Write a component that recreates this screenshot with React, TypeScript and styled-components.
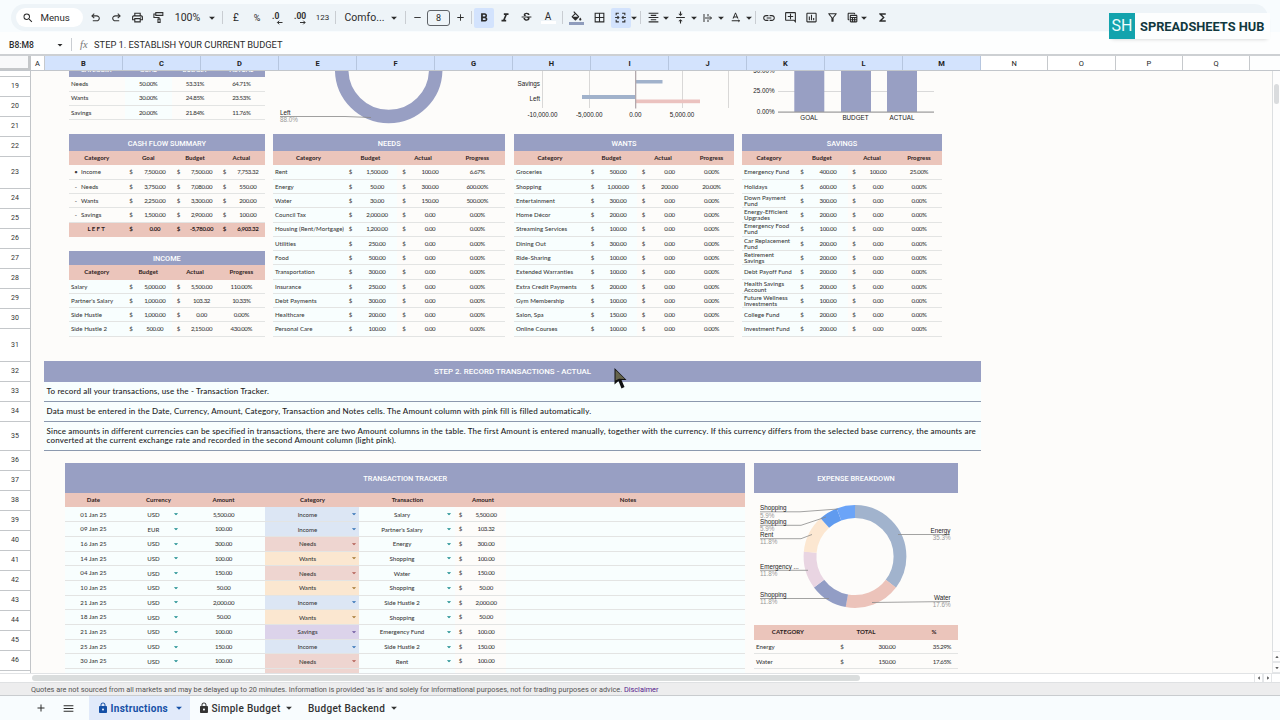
import React from "react";
import styled, {createGlobalStyle} from "styled-components";
import {
    MdAdd, MdArrowDropDown, MdBorderAll, MdFormatAlignCenter, MdFormatBold, MdFormatColorFill, MdFormatItalic,
    MdFunctions, MdInsertChartOutlined, MdLink, MdLock, MdMenu, MdOutlineAddComment, MdOutlineFilterAlt,
    MdOutlinePrint, MdOutlineTableView, MdRemove, MdSearch, MdStrikethroughS, MdTextRotationNone,
    MdVerticalAlignCenter
} from "react-icons/md";

const colors = {
    purple: "#989fc3",
    pink: "#ebc5bb",
    paper: "#fdfcfa",
    ice: "#f8fefe",
    line: "#e3e4e3",
    selected: "#d3e3fd",
    ink: "#2b2b2b",
    blue: "#a1b2cb",
};

const GlobalStyle = createGlobalStyle`
  body {
    margin: 0;
    overflow: hidden;
  }

  * {
    box-sizing: border-box;
  }
`;

const Page = styled.div`
  width: 1280px;
  height: 720px;
  display: flex;
  flex-direction: column;
  overflow: hidden;
  background: #fdfefe;
  color: ${colors.ink};
  font-family: Roboto, "Liberation Sans", sans-serif;
`;

/* ---------- toolbar ---------- */

const ToolbarWrap = styled.header`
  height: 32px;
  flex: none;
  padding: 4px 12px 0 11px;
  background: #f8fcfe;
`;

const Toolbar = styled.div`
  height: 27px;
  display: flex;
  align-items: center;
  padding-left: 5px;
  border-radius: 14px;
  background: #eef4f8;
`;

const MenuSearch = styled.div`
  width: 67px;
  height: 19px;
  display: flex;
  align-items: center;
  gap: 6.5px;
  padding-left: 6px;
  margin-right: 2px;
  border-radius: 10px;
  background: #fff;
  font-size: 9.7px;
`;

const Tool = styled.div<{ $w: number, $active?: boolean, $size?: number }>`
  width: ${p => p.$w}px;
  height: 20px;
  flex: none;
  display: flex;
  flex-direction: column;
  align-items: center;
  justify-content: center;
  border-radius: 2px;
  background: ${p => p.$active ? colors.selected : "transparent"};
  font-size: ${p => p.$size || 10}px;
  white-space: nowrap;
`;

const Divider = styled.div<{ $m?: string }>`
  width: 1px;
  height: 13px;
  flex: none;
  margin: ${p => p.$m || "0"};
  background: #c9cdd2;
`;

const SizeBox = styled.div`
  width: 23px;
  height: 16px;
  flex: none;
  display: flex;
  align-items: center;
  justify-content: center;
  border: 1px solid #5f6368;
  border-radius: 3px;
  font-size: 9px;
`;

const Swatch = styled.span<{ $color: string }>`
  width: 15px;
  height: 2.5px;
  margin-top: -1px;
  background: ${p => p.$color};
`;

const Logo = styled.div`
  position: absolute;
  left: 1109px;
  top: 13px;
  width: 161px;
  height: 26px;
  display: flex;
  align-items: center;
  background: #fdfefe;
  color: #12383e;
  font-size: 12.8px;
  font-weight: 700;
  box-shadow: 0 3px 4px -3px rgba(0, 0, 0, .2);
  white-space: nowrap;

  b {
    width: 26px;
    height: 26px;
    margin-right: 5px;
    background: #13a3ad;
    color: #eefcfc;
    font-size: 16px;
    font-weight: 400;
    line-height: 26px;
    text-align: center;
  }
`;

const FormulaBar = styled.div`
  height: 22px;
  flex: none;
  display: flex;
  align-items: center;
  padding: 3px 0 0 9px;
  font-size: 9px;

  .range {
    width: 45px;
    font-weight: 500;
    font-size: 8.6px;
  }

  .fx {
    margin: 0 6.5px 0 8px;
    color: #777;
    font: italic 10.5px "Liberation Serif", serif;
  }

  .formula {
    font-size: 9.3px;
    white-space: nowrap;
  }
`;

/* ---------- grid frame ---------- */

const ColumnHeads = styled.div`
  height: 17px;
  flex: none;
  display: flex;
  border-top: 2px solid #cdd0d3;
  border-bottom: 1px solid #c2c6cb;
`;

const Corner = styled.div`
  width: 31px;
  background: #f8f9fa;
  border-right: 3px solid #c4c7c9;
  border-bottom: 2px solid #c4c7c9;
`;

const ColumnHead = styled.div<{ $w: number, $selected?: boolean }>`
  width: ${p => p.$w}px;
  flex: none;
  display: flex;
  align-items: center;
  justify-content: center;
  border-right: 1px solid ${p => p.$selected ? "#b6c6df" : "#c6c9cc"};
  background: ${p => p.$selected ? colors.selected : "#fff"};
  color: #222;
  font-size: 7.5px;
  font-weight: ${p => p.$selected ? 700 : 400};
`;

const Body = styled.div`
  height: 602px;
  flex: none;
  display: flex;
  overflow: hidden;
`;

const RowHeads = styled.div`
  width: 31px;
  flex: none;
  border-right: 1px solid #c2c5c8;
  background: #fff;
`;

const RowHead = styled.div<{ $h: number }>`
  height: ${p => p.$h}px;
  display: flex;
  align-items: center;
  justify-content: center;
  padding-bottom: 1px;
  border-bottom: 1px solid #c4c7ca;
  font-size: 7px;
  color: #333;
`;

const Canvas = styled.main`
  width: 1241px;
  flex: none;
  background: ${colors.paper};
  font-family: Lato, "Noto Sans", sans-serif;
  overflow: hidden;
`;

const VScroll = styled.div`
  width: 8px;
  flex: none;
  display: flex;
  flex-direction: column;
  align-items: center;
  border-left: 1px solid #dcdfe1;
  background: #fdfdfd;

  i {
    width: 5px;
    height: 20px;
    margin: 13px 0 auto;
    border-radius: 3px;
    background: #dadcde;
  }
`;

const ScrollArrow = styled.div<{ $turn: number }>`
  width: 9px;
  height: 11px;
  display: flex;
  align-items: center;
  justify-content: center;
  border: 1px solid #e4e6e8;

  svg {
    flex: none;
    transform: rotate(${p => p.$turn}deg);
  }
`;

const HScroll = styled.div`
  height: 9px;
  flex: none;
  display: flex;
  align-items: center;
  padding-left: 32px;
  padding-right: 8px;
  background: #fff;
  border-top: 1px solid #e1e3e5;

  i {
    width: 828px;
    height: 6px;
    margin-right: auto;
    border-radius: 3px;
    background: #dadddd;
  }
`;

const Disclaimer = styled.div`
  height: 14px;
  flex: none;
  padding-left: 31px;
  background: #ededee;
  border-top: 1px solid #dfe1e3;
  border-bottom: 1px solid #c9cccf;
  color: #555;
  font-size: 7.34px;
  line-height: 13px;
  white-space: nowrap;

  a {
    color: #551a8b;
  }
`;

const Tabs = styled.footer`
  height: 24px;
  flex: none;
  display: flex;
  align-items: center;
  padding-left: 34px;
  background: #f8fcfe;
`;

const Tab = styled.div<{ $w: number, $active?: boolean }>`
  width: ${p => p.$w}px;
  height: 24px;
  display: flex;
  align-items: center;
  gap: 1.5px;
  padding: 0 4px 0 8px;
  background: ${p => p.$active ? "#e1eafa" : "transparent"};
  color: ${p => p.$active ? "#1550a6" : "#333"};
  font-size: 10px;
  font-weight: ${p => p.$active ? 700 : 500};
  letter-spacing: 0.3px;
  white-space: nowrap;

  svg:last-child {
    margin-left: auto;
  }
`;

/* ---------- sheet content ---------- */

const TopRow = styled.section`
  height: 63.2px;
  display: flex;
  padding-left: 38px;
`;

const BudgetRow = styled.section`
  height: 226.8px;
  display: flex;
  padding-left: 38px;
`;

const Block = styled.div<{ $w: number, $mr?: number }>`
  width: ${p => p.$w}px;
  flex: none;
  margin-right: ${p => p.$mr || 0}px;
`;

const Title = styled.div<{ $h: number }>`
  height: ${p => p.$h}px;
  display: flex;
  align-items: center;
  justify-content: center;
  padding-top: 1px;
  background: ${colors.purple};
  color: #fff;
  font: 500 7.35px Roboto, sans-serif;
`;

const Row = styled.div<{ $cols: string, $kind?: string, $h?: number }>`
  height: ${p => p.$h || 14.27}px;
  display: grid;
  grid-template-columns: ${p => p.$cols};
  align-items: stretch;
  border-bottom: 1px solid ${p => p.$kind ? "transparent" : colors.line};
  background: ${p => p.$kind === "purple" ? colors.purple : p.$kind ? colors.pink : "transparent"};
  background-clip: border-box;
  color: ${p => p.$kind === "purple" ? "#fff" : p.$kind ? "#2b2020" : "#3a3a3a"};
  font-size: 6.1px;
  font-weight: ${p => p.$kind ? 700 : 500};
`;

const Cell = styled.div<{ $left?: boolean, $ice?: boolean, $num?: boolean, $spaced?: boolean, $bg?: string }>`
  display: flex;
  align-items: center;
  justify-content: ${p => p.$left ? "flex-start" : "center"};
  padding-top: 0.6px;
  padding-left: ${p => p.$left ? 2 : 0}px;
  background: ${p => p.$bg || (p.$ice ? colors.ice : "transparent")};
  line-height: 6px;
  letter-spacing: ${p => p.$num ? -0.35 : p.$spaced ? 1.2 : 0.04}px;
  white-space: ${p => p.$left ? "pre" : "nowrap"};
`;

const Bullet = styled.span`
  width: 10px;
  text-align: center;
`;

const Banner = styled.div`
  width: 937px;
  height: 21px;
  display: flex;
  align-items: center;
  justify-content: center;
  background: ${colors.purple};
  color: #fff;
  font: 500 7.95px Roboto, sans-serif;
`;

const Step = styled.section`
  margin-left: 13px;
`;

const Note = styled.p<{ $h: number }>`
  width: 937px;
  height: ${p => p.$h}px;
  display: flex;
  align-items: center;
  margin: 0;
  padding-left: 2.5px;
  background: ${colors.ice};
  border-bottom: 1px solid #8c99ae;
  color: #222;
  font-size: 8px;
  line-height: 9px;
  font-weight: 500;
  letter-spacing: 0.182px;
  white-space: pre;
`;

const TrackerRow = styled.section`
  display: flex;
  padding: 12.2px 0 0 34px;
`;

const Pick = styled.div<{ $bg: string, $center: number, $caret: number, $color: string }>`
  display: flex;
  align-items: center;
  background: ${p => p.$bg};
  white-space: nowrap;

  span {
    width: ${p => p.$center * 2}px;
    flex: none;
    text-align: center;
  }

  svg {
    margin-left: ${p => p.$caret - p.$center * 2 - 5.5}px;
    flex: none;
    color: ${p => p.$color};
  }
`;

const ChartText = styled.text<{ $grey?: boolean }>`
  fill: ${p => p.$grey ? "#999" : "#222"};
  font: 6.3px "Liberation Sans", Arial, sans-serif;
`;

const Pointer = styled.svg`
  position: absolute;
  left: 613px;
  top: 367px;
`;

const months = [
    ["Needs", "50.00%", "53.31%", "64.71%"],
    ["Wants", "30.00%", "24.85%", "23.53%"],
    ["Savings", "20.00%", "21.84%", "11.76%"],
];

const cashFlow = [
    ["•", "Income", "7,500.00", "7,500.00", "7,753.32"],
    ["-", "Needs", "3,750.00", "7,080.00", "550.00"],
    ["-", "Wants", "2,250.00", "3,300.00", "200.00"],
    ["-", "Savings", "1,500.00", "2,900.00", "100.00"],
];

const income = [
    ["Salary", "5,000.00", "5,500.00", "110.00%"],
    ["Partner's Salary", "1,000.00", "103.32", "10.33%"],
    ["Side Hustle", "1,000.00", "0.00", "0.00%"],
    ["Side Hustle 2", "500.00", "2,150.00", "430.00%"],
];

const needs = [
    ["Rent", "1,500.00", "100.00", "6.67%"],
    ["Energy", "50.00", "300.00", "600.00%"],
    ["Water", "30.00", "150.00", "500.00%"],
    ["Council Tax", "2,000.00"],
    ["Housing (Rent/Mortgage)", "1,200.00"],
    ["Utilities", "250.00"],
    ["Food", "500.00"],
    ["Transportation", "300.00"],
    ["Insurance", "250.00"],
    ["Debt Payments", "300.00"],
    ["Healthcare", "200.00"],
    ["Personal Care", "100.00"],
];

const wants = [
    ["Groceries", "500.00"],
    ["Shopping", "1,000.00", "200.00", "20.00%"],
    ["Entertainment", "300.00"],
    ["Home Décor", "200.00"],
    ["Streaming Services", "100.00"],
    ["Dining Out", "300.00"],
    ["Ride-Sharing", "100.00"],
    ["Extended Warranties", "100.00"],
    ["Extra Credit Payments", "200.00"],
    ["Gym Membership", "100.00"],
    ["Salon, Spa", "150.00"],
    ["Online Courses", "100.00"],
];

const savings = [
    ["Emergency Fund", "400.00", "100.00", "25.00%"],
    ["Holidays", "600.00"],
    ["Down Payment\nFund", "300.00"],
    ["Energy-Efficient\nUpgrades", "200.00"],
    ["Emergency Food\nFund", "100.00"],
    ["Car Replacement\nFund", "200.00"],
    ["Retirement\nSavings", "200.00"],
    ["Debt Payoff Fund", "200.00"],
    ["Health Savings\nAccount", "200.00"],
    ["Future Wellness\nInvestments", "100.00"],
    ["College Fund", "200.00"],
    ["Investment Fund", "200.00"],
];

const transactions = [
    ["01 Jan 25", "USD", "5,500.00", "Income", "Salary", "5,500.00"],
    ["09 Jan 25", "EUR", "100.00", "Income", "Partner's Salary", "103.32"],
    ["16 Jan 25", "USD", "300.00", "Needs", "Energy", "300.00"],
    ["14 Jan 25", "USD", "100.00", "Wants", "Shopping", "100.00"],
    ["04 Jan 25", "USD", "150.00", "Needs", "Water", "150.00"],
    ["10 Jan 25", "USD", "50.00", "Wants", "Shopping", "50.00"],
    ["21 Jan 25", "USD", "2,000.00", "Income", "Side Hustle 2", "2,000.00"],
    ["18 Jan 25", "USD", "50.00", "Wants", "Shopping", "50.00"],
    ["21 Jan 25", "USD", "100.00", "Savings", "Emergency Fund", "100.00"],
    ["25 Jan 25", "USD", "150.00", "Income", "Side Hustle 2", "150.00"],
    ["30 Jan 25", "USD", "100.00", "Needs", "Rent", "100.00"],
    ["", "", "", "Needs", "", ""],
];

const kinds: Record<string, { bg: string, caret: string }> = {
    Income: {bg: "#dce6f4", caret: "#2f6fb5"},
    Needs: {bg: "#eed5d0", caret: "#b05a50"},
    Wants: {bg: "#fbe7d0", caret: "#a5762f"},
    Savings: {bg: "#dcd3ea", caret: "#6a559c"},
};

const rowHeights = [6, 20, 20, 20, 20, 32, 20, 20, 20, 20, 20, 20, 20, 33, 20, 20, 20, 29, 20, 20, 20, 20, 20, 20, 20, 20, 20, 20, 20];

function Caret(props: { size?: number }) {
    return <MdArrowDropDown size={props.size || 14}/>;
}

function Svg(props: { d: string, size?: number }) {
    return (
        <svg width={props.size || 13} height={props.size || 13} viewBox="0 0 24 24" fill="none" stroke="#333"
             strokeWidth={2}>
            <path d={props.d}/>
        </svg>
    );
}

function Decimal(props: { label: string, right?: boolean }) {
    return (
        <svg width={16} height={14} viewBox="0 0 16 14">
            <text x={props.right ? 1 : 2} y={8} fontFamily="Roboto, sans-serif" fontSize={8.5} fontWeight={700}
                  fill="#333">{props.label}</text>
            <path d={props.right ? "M7 11.500h5M10.300 9.700l1.800 1.800-1.800 1.800" : "M12.500 11.500h-5M9.200 9.700L7.400 11.500l1.800 1.800"}
                  stroke="#333" fill="none"/>
        </svg>
    );
}

function ToolbarItems() {
    return (
        <Toolbar>
            <MenuSearch><MdSearch size={12}/>Menus</MenuSearch>
            <Tool $w={21}>
                <svg width={13} height={13} viewBox="0 -960 960 960" fill="#333">
                    <path d="M280-200v-80h284q63 0 109.500-40T720-420q0-60-46.500-100T564-560H312l104 104-56 56-200-200 200-200 56 56-104 104h252q97 0 166.500 63T800-420q0 94-69.500 157T564-200H280Z"/>
                </svg>
            </Tool>
            <Tool $w={21}>
                <svg width={13} height={13} viewBox="0 -960 960 960" fill="#333">
                    <path d="M396-200q-97 0-166.500-63T160-420q0-94 69.500-157T396-640h252L544-744l56-56 200 200-200 200-56-56 104-104H396q-63 0-109.500 40T240-420q0 60 46.500 100T396-280h284v80H396Z"/>
                </svg>
            </Tool>
            <Tool $w={21}><MdOutlinePrint size={13}/></Tool>
            <Tool $w={21}><Svg d="M7 3h13v5H7zM7 5.500H3.500v6.500H13v3M11 15h4v6h-4z"/></Tool>
            <Tool $w={37} $size={10.5}>100%</Tool>
            <Tool $w={11}><Caret/></Tool>
            <Divider $m="0 1px 0 5px"/>
            <Tool $w={24}>£</Tool>
            <Tool $w={18} $size={9}>%</Tool>
            <Tool $w={24}><Decimal label=".0"/></Tool>
            <Tool $w={21}><Decimal label=".00" right/></Tool>
            <Tool $w={23} $size={8}>123</Tool>
            <Divider $m="0 2px 0 1px"/>
            <Tool $w={53} $size={10.5}>Comfo...</Tool>
            <Tool $w={5}><Caret/></Tool>
            <Divider $m="0 1px 0 9px"/>
            <Tool $w={20}><MdRemove size={11}/></Tool>
            <SizeBox>8</SizeBox>
            <Tool $w={20}><MdAdd size={11}/></Tool>
            <Divider $m="0 2px 0 1px"/>
            <Tool $w={20} $active><MdFormatBold size={14}/></Tool>
            <Tool $w={22}><MdFormatItalic size={14}/></Tool>
            <Tool $w={21}><MdStrikethroughS size={13}/></Tool>
            <Tool $w={22}>A<Swatch $color="#fff"/></Tool>
            <Divider $m="0 2px 0 2.500px"/>
            <Tool $w={23}><MdFormatColorFill size={13} viewBox="0 0 24 19"/><Swatch $color="#8f9cbc"/></Tool>
            <Tool $w={23}><MdBorderAll size={13}/></Tool>
            <Tool $w={20} $active>
                <Svg d="M9 4H4v4M15 4h5v4M9 20H4v-4M15 20h5v-4M2 12h7M6.500 9.500L9 12l-2.500 2.500M22 12h-7M17.500 9.500L15 12l2.500 2.500"/>
            </Tool>
            <Tool $w={7}><Caret/></Tool>
            <Divider $m="0 1px 0 2.500px"/>
            <Tool $w={22}><MdFormatAlignCenter size={13}/></Tool>
            <Tool $w={4}><Caret/></Tool>
            <Tool $w={24}><MdVerticalAlignCenter size={13}/></Tool>
            <Tool $w={3}><Caret/></Tool>
            <Tool $w={25}><Svg d="M4 4v16M12 4v5M12 15v5M6 12h13M15.500 8.500L19 12l-3.500 3.500" size={12}/></Tool>
            <Tool $w={2}><Caret/></Tool>
            <Tool $w={26}><MdTextRotationNone size={13}/></Tool>
            <Tool $w={2}><Caret/></Tool>
            <Divider $m="0 1px 0 5px"/>
            <Tool $w={23}><MdLink size={14}/></Tool>
            <Tool $w={20}><MdOutlineAddComment size={13}/></Tool>
            <Tool $w={22}><MdInsertChartOutlined size={13}/></Tool>
            <Tool $w={21}><MdOutlineFilterAlt size={13}/></Tool>
            <Tool $w={18}><MdOutlineTableView size={13}/></Tool>
            <Tool $w={6}><Caret/></Tool>
            <Tool $w={30}><MdFunctions size={13}/></Tool>
        </Toolbar>
    );
}

function BudgetTable(props: { title: string, rows: string[][], cols: number[], w: number, mr?: number }) {
    const {title, rows, cols, w, mr} = props;
    const [cat, d1, v1, d2, v2] = cols;
    const grid = `${cat}px ${d1}px ${v1}px ${d2}px ${v2}px 1fr`;
    return (
        <Block $w={w} $mr={mr}>
            <Title $h={17}>{title}</Title>
            <Row $kind="pink" $cols={`${cat}px ${d1 + v1}px ${d2 + v2}px 1fr`}>
                <Cell>Category</Cell><Cell>Budget</Cell><Cell>Actual</Cell><Cell>Progress</Cell>
            </Row>
            {rows.map(([name, budget, actual = "0.00", progress = "0.00%"]) => (
                <Row key={name} $cols={grid}>
                    <Cell $left $ice>{name}</Cell>
                    <Cell $ice>$</Cell>
                    <Cell $num $ice>{budget}</Cell>
                    <Cell>$</Cell>
                    <Cell $num>{actual}</Cell>
                    <Cell $num>{progress}</Cell>
                </Row>
            ))}
        </Block>
    );
}

const headCols = "55.5px 47.5px 46px 1fr";
const summaryCols = "55.5px 13px 34.5px 13px 33px 13px 1fr";

const Gap = styled.div`
  height: 14.27px;
`;

function Summary() {
    return (
        <Block $w={195.7} $mr={8.3}>
            <Title $h={17}>CASH FLOW SUMMARY</Title>
            <Row $kind="pink" $cols={headCols}>
                <Cell>Category</Cell><Cell>Goal</Cell><Cell>Budget</Cell><Cell>Actual</Cell>
            </Row>
            {cashFlow.map(([mark, name, goal, budget, actual]) => (
                <Row key={name} $cols={summaryCols}>
                    <Cell $left><Bullet>{mark}</Bullet>{name}</Cell>
                    <Cell>$</Cell><Cell $num>{goal}</Cell>
                    <Cell>$</Cell><Cell $num>{budget}</Cell>
                    <Cell>$</Cell><Cell $num>{actual}</Cell>
                </Row>
            ))}
            <Row $kind="pink" $cols={summaryCols}>
                <Cell $spaced>LEFT</Cell>
                <Cell>$</Cell><Cell $num>0.00</Cell>
                <Cell>$</Cell><Cell $num>-5,780.00</Cell>
                <Cell>$</Cell><Cell $num>6,903.32</Cell>
            </Row>
            <Gap/>
            <Title $h={14.27}>INCOME</Title>
            <Row $kind="pink" $cols={headCols}>
                <Cell>Category</Cell><Cell>Budget</Cell><Cell>Actual</Cell><Cell>Progress</Cell>
            </Row>
            {income.map(([name, budget, actual, progress]) => (
                <Row key={name} $cols="55.5px 13px 34.500px 13px 33px 1fr">
                    <Cell $left $ice>{name}</Cell>
                    <Cell $ice>$</Cell><Cell $num $ice>{budget}</Cell>
                    <Cell>$</Cell><Cell $num>{actual}</Cell>
                    <Cell $num>{progress}</Cell>
                </Row>
            ))}
        </Block>
    );
}

function BudgetDonut() {
    return (
        <svg width={241} height={63} viewBox="273 71 241 63">
            <circle cx={388.7} cy={69.500} r={47} fill="none" stroke={colors.purple} strokeWidth={13.500}/>
            <path d="M280 116.500H345L371 117.500" stroke="#888" strokeWidth={0.8} fill="none"/>
            <ChartText x={280} y={115.300}>Left</ChartText>
            <ChartText x={280} y={122.300} $grey>88.0%</ChartText>
        </svg>
    );
}

function CashFlowBars() {
    return (
        <svg width={228} height={63} viewBox="514 71 228 63">
            {[542, 589, 682, 728].map(x => <rect key={x} x={x} y={71} width={1} height={37} fill="#d9d8d7"/>)}
            <rect x={636} y={80} width={26.500} height={3.500} fill={colors.blue}/>
            <rect x={582} y={95} width={54} height={4} fill={colors.blue}/>
            <rect x={636} y={99.500} width={64} height={3.700} fill="#ebc2bf"/>
            <rect x={635} y={71} width={1.300} height={37.500} fill="#b3a9ad"/>
            <g textAnchor="end">
                <ChartText x={540} y={86.300}>Savings</ChartText>
                <ChartText x={540} y={101.300}>Left</ChartText>
            </g>
            <g textAnchor="middle">
                <ChartText x={542.500} y={117}>-10,000.00</ChartText>
                <ChartText x={589.300} y={117}>-5,000.00</ChartText>
                <ChartText x={635.500} y={117}>0.00</ChartText>
                <ChartText x={682} y={117}>5,000.00</ChartText>
            </g>
        </svg>
    );
}

function ShareColumns() {
    return (
        <svg width={200} height={63} viewBox="742 71 200 63">
            <rect x={778} y={91} width={156} height={1} fill="#d9d9d9"/>
            {[794.300, 841, 887].map(x => <rect key={x} x={x} y={71} width={30} height={41} fill={colors.purple}/>)}
            <rect x={778} y={111.500} width={156} height={1.200} fill="#999"/>
            <g textAnchor="end">
                <ChartText x={774.700} y={73}>50.00%</ChartText>
                <ChartText x={774.700} y={93.300}>25.00%</ChartText>
                <ChartText x={774.700} y={113.700}>0.00%</ChartText>
            </g>
            <g textAnchor="middle">
                <ChartText x={809} y={119.500}>GOAL</ChartText>
                <ChartText x={855.500} y={119.500}>BUDGET</ChartText>
                <ChartText x={902} y={119.500}>ACTUAL</ChartText>
            </g>
        </svg>
    );
}

const slices = [
    {share: 35.3, color: "#a1b3cd"},
    {share: 17.6, color: "#ecc3ba"},
    {share: 11.8, color: "#929dc5"},
    {share: 11.8, color: "#e9d5e2"},
    {share: 11.8, color: "#fce7d1"},
    {share: 5.9, color: "#609bef"},
    {share: 5.8, color: "#6ba4f8"},
];

const labels = [
    {name: "Shopping", value: "5.9%", y: 511.3, line: "M760 511.800H800L838 509"},
    {name: "Shopping", value: "5.9%", y: 525, line: "M760 525.300H801L826 517"},
    {name: "Rent", value: "11.8%", y: 538, line: "M760 538.700H801L812 534.500"},
    {name: "Emergency ...", value: "11.8%", y: 569.8, line: "M760 570.300H808"},
    {name: "Shopping", value: "11.8%", y: 598, line: "M760 598.500H829"},
    {name: "Energy", value: "35.3%", y: 534, line: "M950 534.500H898", right: true},
    {name: "Water", value: "17.6%", y: 601, line: "M950 601.500L872 602.500", right: true},
];

function ExpenseDonut() {
    const r = 45;
    const round = 2 * Math.PI * r;
    let start = 0;
    return (
        <svg width={204} height={132} viewBox="754 493 204 132" style={{display: "block"}}>
            {slices.map((slice, i) => {
                const turn = start * 3.6 - 90;
                start += slice.share;
                return (
                    <circle key={i} cx={855} cy={556.500} r={r} fill="none" stroke={slice.color} strokeWidth={12.800}
                            strokeDasharray={`${round * slice.share / 100} ${round}`}
                            transform={`rotate(${turn} 855 556.5)`}/>
                );
            })}
            {labels.map(({name, value, y, line, right}) => (
                <g key={y} textAnchor={right ? "end" : "start"}>
                    <path d={line} stroke="#8b8b8b" strokeWidth={0.8} fill="none"/>
                    <ChartText x={right ? 950.500 : 760} y={y - 1.300}>{name}</ChartText>
                    <ChartText x={right ? 950.500 : 760} y={y + 6.400} $grey>{value}</ChartText>
                </g>
            ))}
        </svg>
    );
}

function Tracker() {
    return (
        <Block $w={680.3} $mr={8.7}>
            <Title $h={30}>TRANSACTION TRACKER</Title>
            <Row $h={14.3} $kind="pink" $cols="57px 73px 57px 121px 69px 82px 208px 1fr">
                <Cell>Date</Cell><Cell>Currency</Cell><Cell>Amount</Cell><Cell>Category</Cell>
                <Cell>Transaction</Cell><Cell>Amount</Cell><Cell>Notes</Cell>
            </Row>
            {transactions.map(([date, currency, amount, category, name, total], i) => (
                <Row key={i} $h={14.7} $cols="57px 60px 83px 94px 96px 11px 40px 1fr">
                    <Cell $ice>{date}</Cell>
                    <Pick $bg={colors.ice} $center={31.5} $caret={54.500} $color="#168a8c">
                        <span>{currency}</span>{date && <Caret size={10}/>}
                    </Pick>
                    <Cell $ice $num>{amount}</Cell>
                    <Pick $bg={kinds[category].bg} $center={42.5} $caret={89.5} $color={kinds[category].caret}>
                        <span>{date && category}</span>{date && <Caret size={10}/>}
                    </Pick>
                    <Pick $bg={colors.ice} $center={43} $caret={90.500} $color="#168a8c">
                        <span>{name}</span>{date && <Caret size={10}/>}
                    </Pick>
                    <Cell>{date && "$"}</Cell>
                    <Cell $num>{total}</Cell>
                    <Cell $ice/>
                </Row>
            ))}
        </Block>
    );
}

function Expenses() {
    const cols = "82px 12px 78px 1fr";
    return (
        <Block $w={204}>
            <Title $h={30}>EXPENSE BREAKDOWN</Title>
            <ExpenseDonut/>
            <Row $h={14.6} $kind="pink" $cols="68px 88px 1fr">
                <Cell>CATEGORY</Cell><Cell>TOTAL</Cell><Cell>%</Cell>
            </Row>
            <Row $h={14.7} $cols={cols}>
                <Cell $left>Energy</Cell><Cell>$</Cell><Cell $num>300.00</Cell><Cell $num>35.29%</Cell>
            </Row>
            <Row $h={14.7} $cols={cols}>
                <Cell $left>Water</Cell><Cell>$</Cell><Cell $num>150.00</Cell><Cell $num>17.65%</Cell>
            </Row>
        </Block>
    );
}

// the header row is scrolled half out of view
const ScrolledBlock = styled(Block)`
  margin-top: -8px;
`;

function App() {
    return (
        <Page>
            <GlobalStyle/>
            <ToolbarWrap><ToolbarItems/></ToolbarWrap>
            <Logo><b>SH</b>SPREADSHEETS HUB</Logo>
            <FormulaBar>
                <span className="range">B8:M8</span>
                <Caret size={12}/>
                <Divider $m="0 0 0 5px"/>
                <span className="fx">fx</span>
                <span className="formula">STEP 1. ESTABLISH YOUR CURRENT BUDGET</span>
            </FormulaBar>
            <ColumnHeads>
                <Corner/>
                <ColumnHead $w={14}>A</ColumnHead>
                {"BCDEFGHIJKLM".split("").map(c => <ColumnHead key={c} $w={78} $selected>{c}</ColumnHead>)}
                {"NOPQ".split("").map(c => <ColumnHead key={c} $w={67.3}>{c}</ColumnHead>)}
            </ColumnHeads>
            <Body>
                <RowHeads>
                    {rowHeights.map((h, i) => <RowHead key={i} $h={h}>{i > 0 && i + 18}</RowHead>)}
                </RowHeads>
                <Canvas>
                    <TopRow>
                        <ScrolledBlock $w={195.7} $mr={8.3}>
                            <Row $kind="purple" $h={14.3} $cols={headCols}>
                                <Cell>CATEGORY</Cell><Cell>GOAL</Cell><Cell>BUDGET</Cell><Cell>ACTUAL</Cell>
                            </Row>
                            {months.map(([name, goal, budget, actual]) => (
                                <Row key={name} $cols={headCols}>
                                    <Cell $left>{name}</Cell>
                                    <Cell $num $ice>{goal}</Cell>
                                    <Cell $num>{budget}</Cell>
                                    <Cell $num>{actual}</Cell>
                                </Row>
                            ))}
                        </ScrolledBlock>
                        <BudgetDonut/>
                        <CashFlowBars/>
                        <ShareColumns/>
                    </TopRow>
                    <BudgetRow>
                        <Summary/>
                        <BudgetTable title="NEEDS" rows={needs} cols={[71, 13, 40, 14, 38]} w={232.500} mr={8.500}/>
                        <BudgetTable title="WANTS" rows={wants} cols={[72, 13, 38, 13, 39]} w={220} mr={8}/>
                        <BudgetTable title="SAVINGS" rows={savings} cols={[54, 12, 40, 12, 36]} w={200}/>
                    </BudgetRow>
                    <Step>
                        <Banner>STEP 2. RECORD TRANSACTIONS - ACTUAL</Banner>
                        <Note $h={20}>To record all your transactions, use the - Transaction Tracker.</Note>
                        <Note $h={20}>Data must be entered in the Date, Currency, Amount, Category, Transaction and Notes cells. The Amount column with pink fill is filled automatically.</Note>
                        <Note $h={29}>{"Since amounts in different currencies can be specified in transactions, there are two Amount columns in the table. The first Amount is entered manually, together with the currency. If this currency differs from the selected base currency, the amounts are\nconverted at the current exchange rate and recorded in the second Amount column (light pink)."}</Note>
                    </Step>
                    <TrackerRow>
                        <Tracker/>
                        <Expenses/>
                    </TrackerRow>
                </Canvas>
                <VScroll>
                    <i/>
                    <ScrollArrow $turn={180}><Caret size={8}/></ScrollArrow>
                    <ScrollArrow $turn={0}><Caret size={8}/></ScrollArrow>
                </VScroll>
            </Body>
            <HScroll>
                <i/>
                <ScrollArrow $turn={90}><Caret size={8}/></ScrollArrow>
                <ScrollArrow $turn={-90}><Caret size={8}/></ScrollArrow>
            </HScroll>
            <Disclaimer>
                Quotes are not sourced from all markets and may be delayed up to 20 minutes. Information is provided 'as
                is' and solely for informational purposes, not for trading purposes or advice. <a>Disclaimer</a>
            </Disclaimer>
            <Tabs>
                <Tool $w={14}><MdAdd size={12}/></Tool>
                <Tool $w={41}><MdMenu size={13}/></Tool>
                <Tab $w={101} $active><MdLock size={12}/>Instructions<Caret/></Tab>
                <Tab $w={110}><MdLock size={12}/>Simple Budget<Caret/></Tab>
                <Tab $w={105}>Budget Backend<Caret/></Tab>
            </Tabs>
            <Pointer width={15} height={24} viewBox="0 0 15 24">
                <path d="M1.500 1V17.500L5.500 14L8.500 21.500L11.500 20L8.500 13H13.500Z" fill="#111"/>
                <path d="M2.500 3V13.500L6 11.800L11.800 12Z" fill="#66644c"/>
            </Pointer>
        </Page>
    );
}

export default App;
